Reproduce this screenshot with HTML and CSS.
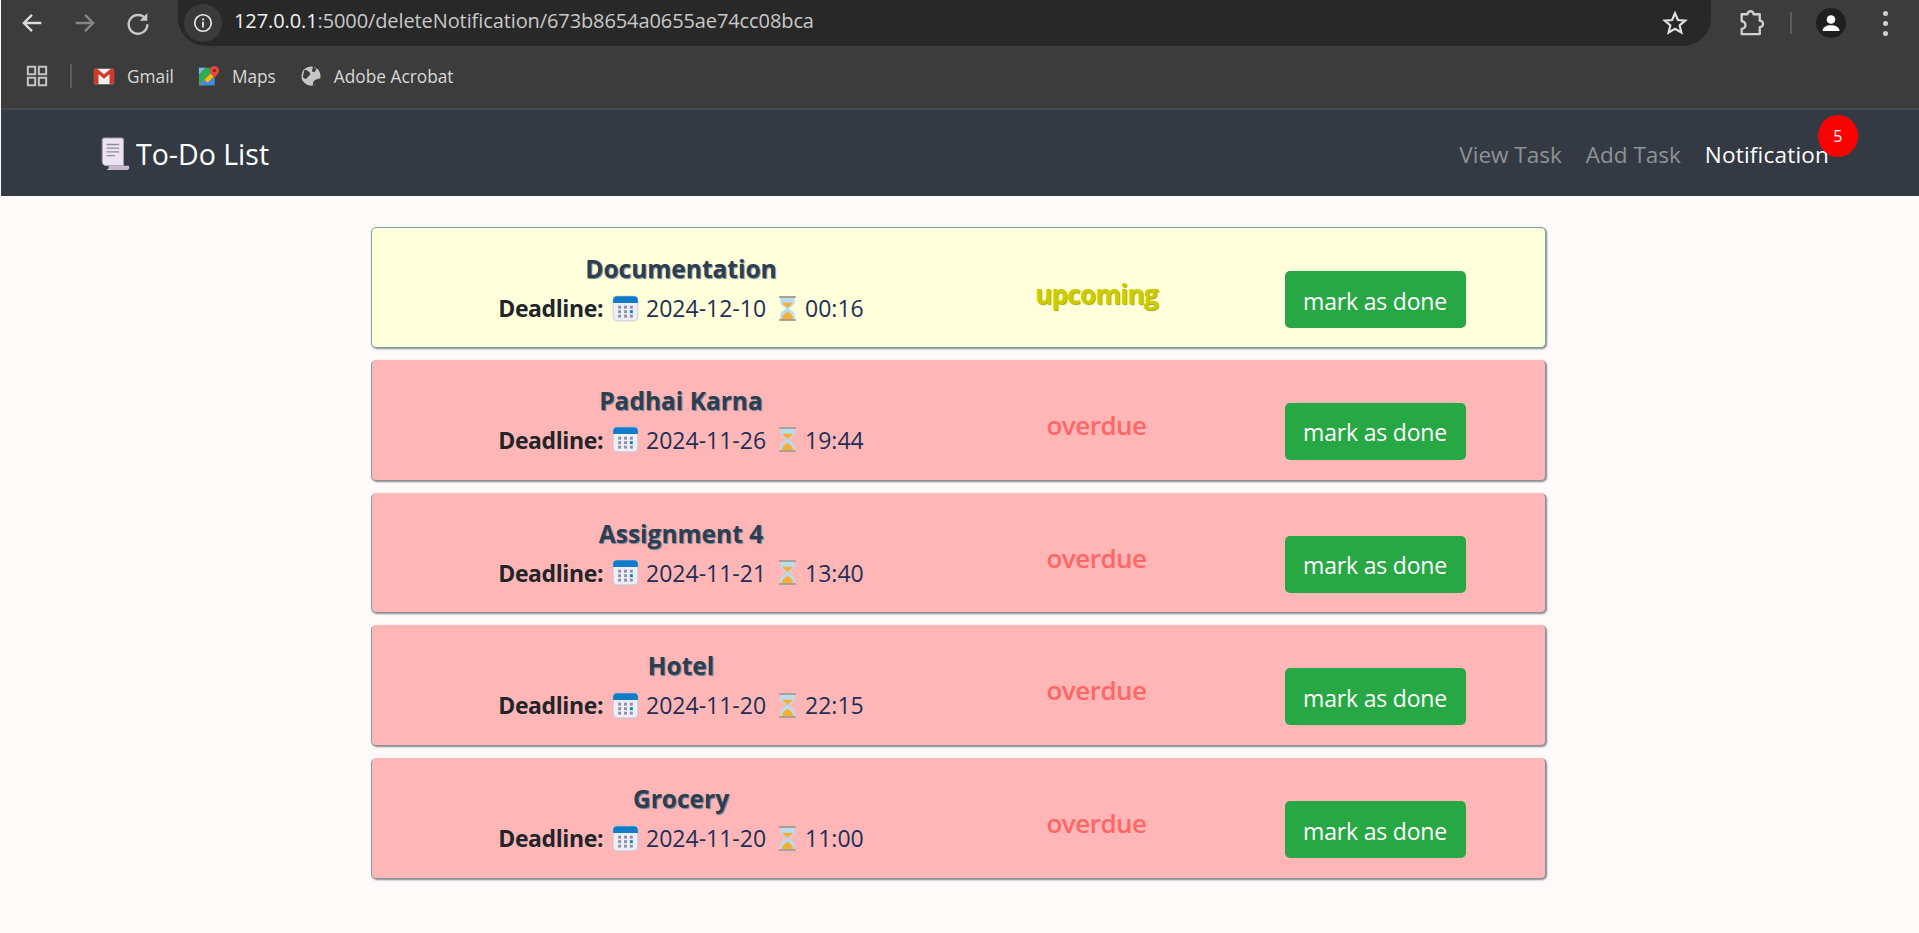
FILE: index.html

```html
<!DOCTYPE html>
<html lang="en">
<head>
  <meta charset="UTF-8" />
  <meta name="viewport" content="width=device-width, initial-scale=1.0"/>
  <title>To-Do List</title>
  <link rel="stylesheet" href="styles.css">
</head>
<body>
  <svg class="defs" aria-hidden="true">
    <symbol id="cal" viewBox="0 0 24 24">
      <rect x="1" y="1" width="22" height="22" rx="3.500" fill="#eeeef6" stroke="#c4c4d4" stroke-width="0.8"/>
      <path d="M1 7V4.500A3.500 3.500 0 0 1 4.500 1h15A3.500 3.500 0 0 1 23 4.500V7z" fill="#0f7cc9"/>
      <g fill="#8f8fa8">
        <rect x="5.500" y="9.500" width="2.600" height="2.600"/>
        <rect x="10.700" y="9.500" width="2.600" height="2.600"/>
        <rect x="15.900" y="9.500" width="2.600" height="2.600"/>
        <rect x="5.500" y="13.500" width="2.600" height="2.600"/>
        <rect x="10.700" y="13.500" width="2.600" height="2.600"/>
        <rect x="5.500" y="17.500" width="2.600" height="2.600"/>
        <rect x="10.700" y="17.500" width="2.600" height="2.600"/>
        <rect x="15.900" y="17.500" width="2.600" height="2.600"/>
      </g>
      <rect x="15.900" y="13.500" width="2.600" height="2.600" fill="#0f7cc9"/>
    </symbol>
    <symbol id="glass" viewBox="0 0 20 26">
      <path d="M3 2h14v4c0 4-4.500 5.500-5.500 7 1 1.500 5.500 3 5.500 7v4H3v-4c0-4 4.500-5.500 5.500-7C7.500 11.500 3 10 3 6z" fill="#b9dcef"/>
      <path d="M5 7.500h10c-.5 2-4 3.500-5 5.500-1-2-4.500-3.500-5-5.500zM10 15.500c1 2.500 5 3 5.500 7.500h-11C5 18.500 9 18 10 15.500z" fill="#f7ae34"/>
      <path d="M2 1h16v2H2zM2 23h16v2H2z" fill="#a8a294"/>
    </symbol>
  </svg>

  <div class="browser">
    <div class="toolbar">
      <div class="nav-btns">
        <svg class="tool" viewBox="0 0 24 24"><path d="M20 12H5M12 5l-7 7 7 7" fill="none" stroke="#dcdcdc" stroke-width="2"/></svg>
        <svg class="tool" viewBox="0 0 24 24"><path d="M4 12h15M12 5l7 7-7 7" fill="none" stroke="#858585" stroke-width="2"/></svg>
        <svg class="tool" viewBox="0 0 24 24"><path d="M18.500 8.500A8 8 0 1 0 20 13" fill="none" stroke="#c8c8c8" stroke-width="2"/><path d="M20 3.500V10h-6.500z" fill="#c8c8c8"/></svg>
      </div>
      <div class="urlbar">
        <span class="info">
          <svg viewBox="0 0 24 24" width="22" height="22"><circle cx="12" cy="12" r="9" fill="none" stroke="#e8e8e8" stroke-width="1.800"/><path d="M11 10.500h2V17h-2zM11 7h2v2h-2z" fill="#e8e8e8"/></svg>
        </span>
        <span class="url"><span class="host">127.0.0.1</span><span class="port">:5000/deleteNotification/673b8654a0655ae74cc08bca</span></span>
        <svg class="star" viewBox="0 0 24 24"><path d="M12 3l2.700 6.200 6.700.6-5.100 4.400 1.600 6.600L12 17.300l-5.900 3.500 1.600-6.600-5.100-4.400 6.700-.6z" fill="none" stroke="#e0e0e0" stroke-width="2"/></svg>
      </div>
      <div class="tool-right">
        <svg class="puzzle" viewBox="0 0 24 24"><path d="M4 4.500h5a2.600 2.600 0 0 1 5.200 0h5.300V10a2.800 2.800 0 0 1 0 5.600v5.900H4v-4.500a3.200 3.200 0 0 0 0-6.500z" fill="none" stroke="#d0d0d0" stroke-width="2" stroke-linejoin="round"/></svg>
        <span class="tool-sep"></span>
        <span class="avatar">
          <svg viewBox="0 0 24 24" width="24" height="24"><circle cx="12" cy="8.500" r="4.300" fill="#fff"/><path d="M3.500 20c0-4 4-5.800 8.500-5.800s8.500 1.800 8.500 5.800z" fill="#fff"/></svg>
        </span>
        <span class="dots"><i></i><i></i><i></i></span>
      </div>
    </div>
    <div class="bookmarks">
      <svg class="apps" viewBox="0 0 24 24"><path d="M2 2h8v8H2zM14 2h8v8h-8zM2 14h8v8H2zM14 14h8v8h-8z" fill="none" stroke="#c4c4c4" stroke-width="2.200"/></svg>
      <span class="bm-sep"></span>
      <a class="bm">
        <svg class="bm-icon" viewBox="0 0 24 24"><rect x="1" y="4" width="22" height="17" rx="2" fill="#f1f1f1"/><path d="M1 6v13a2 2 0 0 0 2 2h3V10l6 5 6-5v11h3a2 2 0 0 0 2-2V6c0-2-2-3-3.500-2L12 10 4.500 4C3 3 1 4 1 6z" fill="#d2392e"/></svg>
        Gmail
      </a>
      <a class="bm">
        <svg class="bm-icon" viewBox="0 0 24 24"><path d="M1 3h17v19H1z" fill="#35a853"/><path d="M1 3h7L1 10z" fill="#7fb6ea"/><path d="M1 22L16 7h2v5L8 22z" fill="#fbbc04"/><path d="M8 22l10-10v10z" fill="#4285f4"/><path d="M1 22l6-6 6 6z" fill="#4285f4"/><path d="M18 1a5 5 0 0 1 5 5c0 3.500-3.200 5-5 9-1.800-4-5-5.500-5-9a5 5 0 0 1 5-5z" fill="#e3463a"/><circle cx="18" cy="6" r="1.700" fill="#8c2018"/></svg>
        Maps
      </a>
      <a class="bm">
        <svg class="bm-icon" viewBox="0 0 24 24"><circle cx="12" cy="12" r="10.500" fill="#c6c6c6"/><path d="M5 5c3 1 5 2 6 4s-2 3-3 5-3 1-5-1M14 22c0-3 1-5 3-6s3 0 4-2l1 3c-2 3-5 5-8 5zM14 2l4 2-2 4-3-1z" fill="#3c3c3c"/></svg>
        Adobe Acrobat
      </a>
    </div>
  </div>

  <nav class="navbar">
    <a class="brand">
      <svg class="scroll" viewBox="0 0 28 32"><path d="M2 3a2 2 0 0 1 2-2h16a2 2 0 0 1 2 2v24H6a4 4 0 0 1-4-4z" fill="#ece4f2" stroke="#a99ab5" stroke-width="1"/><path d="M6 31a3 3 0 0 0 2-4h19c1 2 0 4-2 4z" fill="#c8b8d0"/><path d="M6 7h12M6 10.500h12M6 14h12M6 17.500h8" stroke="#8f8f9c" stroke-width="1.300"/></svg>
      To-Do List
    </a>
    <div class="nav-links">
      <a class="nav-link">View Task</a>
      <a class="nav-link">Add Task</a>
      <a class="nav-link active">Notification<span class="badge">5</span></a>
    </div>
  </nav>

  <main class="list">
    <div class="card upcoming">
      <div class="task">
        <div class="task-title">Documentation</div>
        <div class="task-when"><strong>Deadline:</strong> <svg class="cal"><use href="#cal"/></svg> 2024-12-10 <svg class="glass"><use href="#glass"/></svg> 00:16</div>
      </div>
      <div class="status">upcoming</div>
      <div class="action"><button class="btn-done">mark as done</button></div>
    </div>
    <div class="card overdue">
      <div class="task">
        <div class="task-title">Padhai Karna</div>
        <div class="task-when"><strong>Deadline:</strong> <svg class="cal"><use href="#cal"/></svg> 2024-11-26 <svg class="glass"><use href="#glass"/></svg> 19:44</div>
      </div>
      <div class="status">overdue</div>
      <div class="action"><button class="btn-done">mark as done</button></div>
    </div>
    <div class="card overdue">
      <div class="task">
        <div class="task-title">Assignment 4</div>
        <div class="task-when"><strong>Deadline:</strong> <svg class="cal"><use href="#cal"/></svg> 2024-11-21 <svg class="glass"><use href="#glass"/></svg> 13:40</div>
      </div>
      <div class="status">overdue</div>
      <div class="action"><button class="btn-done">mark as done</button></div>
    </div>
    <div class="card overdue">
      <div class="task">
        <div class="task-title">Hotel</div>
        <div class="task-when"><strong>Deadline:</strong> <svg class="cal"><use href="#cal"/></svg> 2024-11-20 <svg class="glass"><use href="#glass"/></svg> 22:15</div>
      </div>
      <div class="status">overdue</div>
      <div class="action"><button class="btn-done">mark as done</button></div>
    </div>
    <div class="card overdue">
      <div class="task">
        <div class="task-title">Grocery</div>
        <div class="task-when"><strong>Deadline:</strong> <svg class="cal"><use href="#cal"/></svg> 2024-11-20 <svg class="glass"><use href="#glass"/></svg> 11:00</div>
      </div>
      <div class="status">overdue</div>
      <div class="action"><button class="btn-done">mark as done</button></div>
    </div>
  </main>
</body>
</html>
```

FILE: styles.css

```css
html, body {
  margin: 0;
  height: 100%;
}

body {
  background-color: #fffafa;
  font-family: 'Open Sans', 'Noto Sans', sans-serif;
  overflow: hidden;
  padding-left: 1px;
  box-sizing: border-box;
}

.defs {
  display: none;
}

/* browser chrome */
.browser {
  background-color: #3c3c3c;
  color: #d8d8d8;
}

.toolbar {
  display: flex;
  align-items: center;
  height: 46px;
}

.nav-btns {
  display: flex;
  gap: 25px;
  width: 177px;
  padding-left: 17px;
  box-sizing: border-box;
}

.tool {
  width: 28px;
  height: 28px;
}

.urlbar {
  display: flex;
  align-items: center;
  width: 1533px;
  height: 46px;
  background-color: #282828;
  border-radius: 0 0 28px 28px;
  padding: 0 16px 0 6px;
  box-sizing: border-box;
}

.info {
  display: flex;
  align-items: center;
  justify-content: center;
  width: 38px;
  height: 38px;
  border-radius: 50%;
  background-color: #3a3a3a;
  margin-right: 12px;
}

.url {
  flex: 1;
  font-size: 20px;
  letter-spacing: -0.1px;
  color: #c8c8c8;
  padding-bottom: 6px;
}

.host {
  color: #f2f2f2;
}

.star {
  width: 26px;
  height: 26px;
  margin-right: 7px;
}

.tool-right {
  display: flex;
  align-items: center;
  padding-left: 26px;
}

.puzzle {
  width: 28px;
  height: 28px;
}

.tool-sep {
  width: 2px;
  height: 22px;
  background-color: #5c5c5c;
  margin: 0 24px 0 25px;
}

.avatar {
  display: flex;
  align-items: center;
  justify-content: center;
  width: 30px;
  height: 30px;
  border-radius: 50%;
  background-color: #1f1f1f;
  margin-right: 37px;
}

.dots {
  display: flex;
  flex-direction: column;
  gap: 5px;
}

.dots i {
  width: 5px;
  height: 5px;
  border-radius: 50%;
  background-color: #d0d0d0;
}

.bookmarks {
  display: flex;
  align-items: center;
  height: 64px;
  padding: 0 0 2px 25px;
  border-bottom: 2px solid #4a4a4a;
  box-sizing: border-box;
  font-size: 17.300px;
}

.apps {
  width: 22px;
  height: 22px;
}

.bm-sep {
  width: 2px;
  height: 24px;
  background-color: #5c5c5c;
  margin: 0 21px 0 22px;
}

.bm {
  display: flex;
  align-items: center;
  gap: 12px;
  margin-right: 24px;
}

.bm-icon {
  width: 22px;
  height: 22px;
}

/* app navbar */
.navbar {
  display: flex;
  align-items: center;
  justify-content: space-between;
  height: 86px;
  background-color: #343a43;
  padding: 2px 90px 0 99px;
  box-sizing: border-box;
  width: 1918px;
}

.brand {
  display: flex;
  align-items: center;
  gap: 6px;
  font-size: 28.500px;
  color: #fff;
}

.scroll {
  width: 30px;
  height: 34px;
}

.nav-links {
  display: flex;
  gap: 24px;
}

.nav-link {
  position: relative;
  font-size: 22.500px;
  color: #8f9295;
}

.nav-link.active {
  color: #fff;
  letter-spacing: 0.2px;
}

.badge {
  position: absolute;
  top: -24px;
  right: -29px;
  display: flex;
  align-items: center;
  justify-content: center;
  width: 40px;
  height: 42px;
  border-radius: 50%;
  background-color: #ff0000;
  color: #fff;
  font-size: 16px;
}

/* task cards */
.list {
  display: flex;
  flex-direction: column;
  gap: 12px;
  width: 1175px;
  margin: 31px 0 0 370px;
}

.card {
  display: grid;
  grid-template-columns: 618px 215px 1fr;
  height: 120.750px;
  box-sizing: border-box;
  border: 1px solid #76a5a5;
  border-radius: 5px;
  box-shadow: 1px 1px 2px #7d878c;
}

.card.upcoming {
  background-color: #ffffdb;
}

.card.overdue {
  background-color: #ffb6b6;
  border-color: #ffb6b6 #8b9095 #8b9095 #7ea5a5;
}

.task {
  text-align: center;
  padding-top: 23px;
}

.overdue .task {
  padding-top: 22px;
}

.task-title {
  font-size: 24.500px;
  line-height: 36px;
  font-weight: 700;
  color: #2c3e50;
  text-shadow: 1px 1px 1px #6b8299;
}

.task-when {
  display: flex;
  align-items: center;
  justify-content: center;
  gap: 7px;
  font-size: 23px;
  line-height: 36px;
  margin-top: 3px;
  color: #1d2f57;
}

.task-when strong {
  color: #212529;
  letter-spacing: -0.4px;
  margin-right: 2px;
}

.cal {
  width: 27px;
  height: 27px;
}

.glass {
  width: 21px;
  height: 27px;
  margin-left: 4px;
}

.status {
  text-align: center;
  padding: 46px 2px 0 0;
  font-size: 26px;
  line-height: 36px;
  font-weight: 600;
  letter-spacing: -0.5px;
  color: #ff6666;
}

.upcoming .status {
  color: #cccc00;
  font-weight: 700;
  letter-spacing: -0.7px;
  text-shadow: 1px 1px 1px #a5a510;
  padding-top: 48px;
}

.action {
  display: flex;
  justify-content: center;
  align-items: flex-start;
  padding-top: 43px;
}

.overdue .action {
  padding-top: 42px;
}

.btn-done {
  width: 181px;
  height: 57px;
  border: none;
  border-radius: 5px;
  background-color: #28a745;
  color: #fff;
  font-family: inherit;
  font-size: 23px;
  letter-spacing: -0.2px;
  padding: 2px 0 0;
}
```
